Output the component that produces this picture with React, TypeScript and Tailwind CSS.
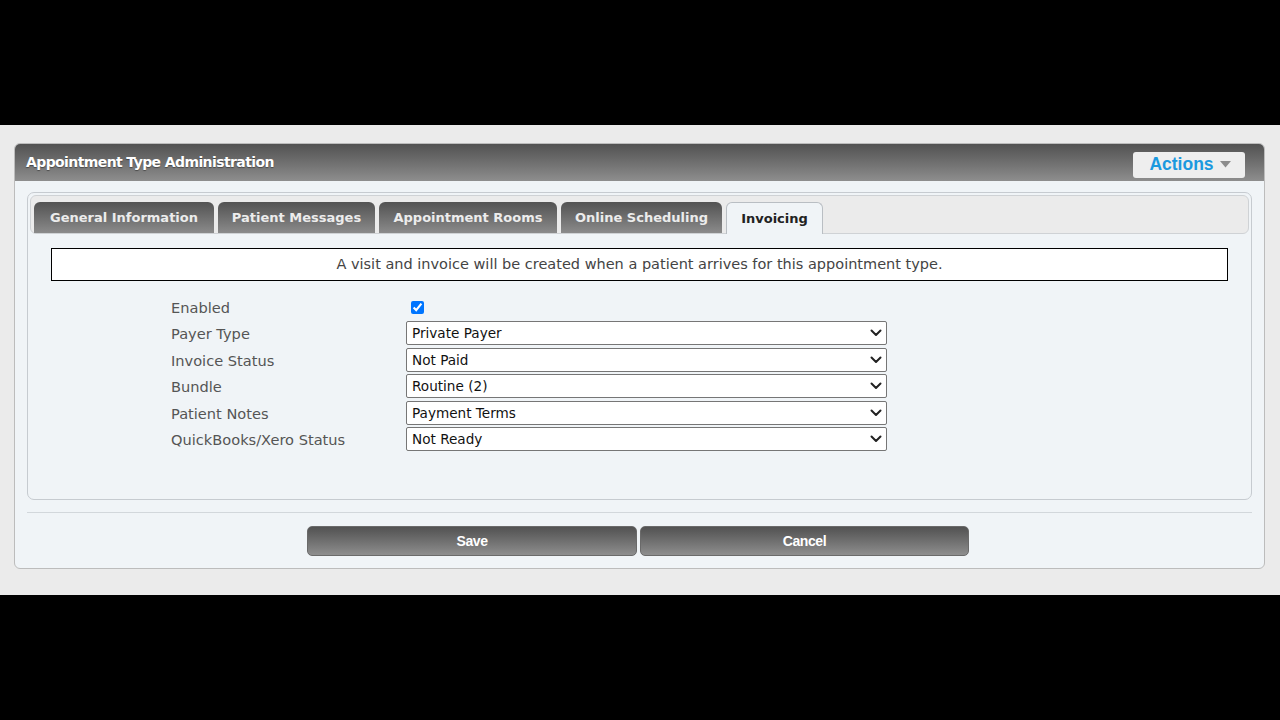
import React from "react";

const tabs = [
  { label: "General Information", width: "w-[180px]" },
  { label: "Patient Messages", width: "w-[157px]" },
  { label: "Appointment Rooms", width: "w-[178px]" },
  { label: "Online Scheduling", width: "w-[161px]" },
];

const fields = [
  { label: "Payer Type", value: "Private Payer" },
  { label: "Invoice Status", value: "Not Paid" },
  { label: "Bundle", value: "Routine (2)" },
  { label: "Patient Notes", value: "Payment Terms" },
  { label: "QuickBooks/Xero Status", value: "Not Ready" },
];

const verdana = "font-['DejaVu_Sans',Verdana,sans-serif]";
const narrow = "font-['Liberation_Sans_Narrow','Liberation_Sans',Arial,sans-serif]";

function Chevron() {
  return (
    <svg
      className="pointer-events-none absolute right-[5px] top-1/2 -translate-y-1/2"
      width="12"
      height="8"
      viewBox="0 0 12 8"
      fill="none"
    >
      <path d="M1.5 1.5 L6 6 L10.5 1.5" stroke="#222" strokeWidth="2" strokeLinecap="round" strokeLinejoin="round" />
    </svg>
  );
}

function SelectRow({ label, value }: { label: string; value: string }) {
  return (
    <div className="flex h-[26.5px] items-center">
      <div className="w-[235px] pt-[2px] text-[14.6px] text-[#555]">{label}</div>
      <div className="relative w-[481px]">
        <select
          defaultValue={value}
          className={`h-[24px] w-full appearance-none rounded-[2px] border border-[#767676] bg-white pl-[5px] text-[13.6px] text-[#111] outline-none ${verdana}`}
        >
          <option>{value}</option>
        </select>
        <Chevron />
      </div>
    </div>
  );
}

export default function App() {
  return (
    <div className={`flex h-[720px] w-[1280px] flex-col bg-black ${verdana}`}>
      <div className="h-[125px] shrink-0" />

      <div className="h-[470px] shrink-0 bg-[#ebebeb] pl-[14px] pt-[18px]">
        <div className="w-[1251px] overflow-hidden rounded-[6px] border border-[#bcbcbc] bg-[#f0f4f7]">
          {/* Header */}
          <div className="flex h-[37px] items-center justify-between bg-gradient-to-b from-[#525252] to-[#8e8e8e] pl-[11px] pr-[19px]">
            <span className="text-[14px] font-bold tracking-[-0.6px] text-white [text-shadow:0_1px_1px_rgba(0,0,0,0.4)]">
              Appointment Type Administration
            </span>
            <div className="mt-[4px] flex h-[26px] w-[112px] items-center justify-center gap-[6px] rounded-[3px] bg-[#eeeeee] pl-[2px]">
              <span className={`text-[17.5px] font-bold text-[#1b99df] ${narrow}`}>Actions</span>
              <svg width="11" height="7" viewBox="0 0 11 7">
                <path d="M0 0 L11 0 L5.5 6.5 Z" fill="#8c8c8c" />
              </svg>
            </div>
          </div>

          {/* Body */}
          <div className="px-[12px] pt-[11px]">
            <div className="h-[308px] rounded-[7px] border border-[#c6cbd0] bg-[#f0f4f7] p-[2px]">
              {/* Tab bar */}
              <div className="flex h-[39px] items-end gap-[4px] rounded-[6px] border border-[#cfd2d5] bg-[#ebebeb] pl-[3px]">
                {tabs.map((t) => (
                  <div
                    key={t.label}
                    className={`flex h-[31px] ${t.width} items-center justify-center rounded-t-[6px] bg-gradient-to-b from-[#535353] to-[#8b8b8b] text-[13px] font-bold text-[#ececec]`}
                  >
                    {t.label}
                  </div>
                ))}
                <div className="-mb-px flex h-[32px] w-[97px] items-center justify-center rounded-t-[6px] border border-b-0 border-[#b9bec3] bg-[#f0f4f7] text-[13px] font-bold text-[#222]">
                  Invoicing
                </div>
              </div>

              {/* Tab content */}
              <div className="px-[21px] pt-[14px]">
                <div className="flex h-[33px] items-center justify-center border border-black bg-white text-[14.5px] text-[#444]">
                  A visit and invoice will be created when a patient arrives for this appointment type.
                </div>

                <div className="pl-[120px] pt-[13px]">
                  <div className="flex h-[26px] items-center">
                    <div className="w-[235px] pt-[2px] text-[14.6px] text-[#555]">Enabled</div>
                    <input
                      type="checkbox"
                      defaultChecked
                      className="ml-[5px] h-[13px] w-[13px] accent-[#0075ff]"
                    />
                  </div>
                  {fields.map((f) => (
                    <SelectRow key={f.label} label={f.label} value={f.value} />
                  ))}
                </div>
              </div>
            </div>

            <div className="mt-[12px] h-px bg-[#d2d7db]" />

            {/* Buttons */}
            <div className="flex justify-center gap-[3px] pb-[12px] pr-[3px] pt-[13px]">
              <button
                className={`h-[30px] w-[330px] rounded-[5px] border border-[#6a6a6a] bg-gradient-to-b from-[#525252] to-[#8e8e8e] text-[14px] font-bold tracking-[-0.4px] text-white ${narrow}`}
              >
                Save
              </button>
              <button
                className={`h-[30px] w-[329px] rounded-[5px] border border-[#6a6a6a] bg-gradient-to-b from-[#525252] to-[#8e8e8e] text-[14px] font-bold tracking-[-0.4px] text-white ${narrow}`}
              >
                Cancel
              </button>
            </div>
          </div>
        </div>
      </div>

      <div className="flex-1" />
    </div>
  );
}
